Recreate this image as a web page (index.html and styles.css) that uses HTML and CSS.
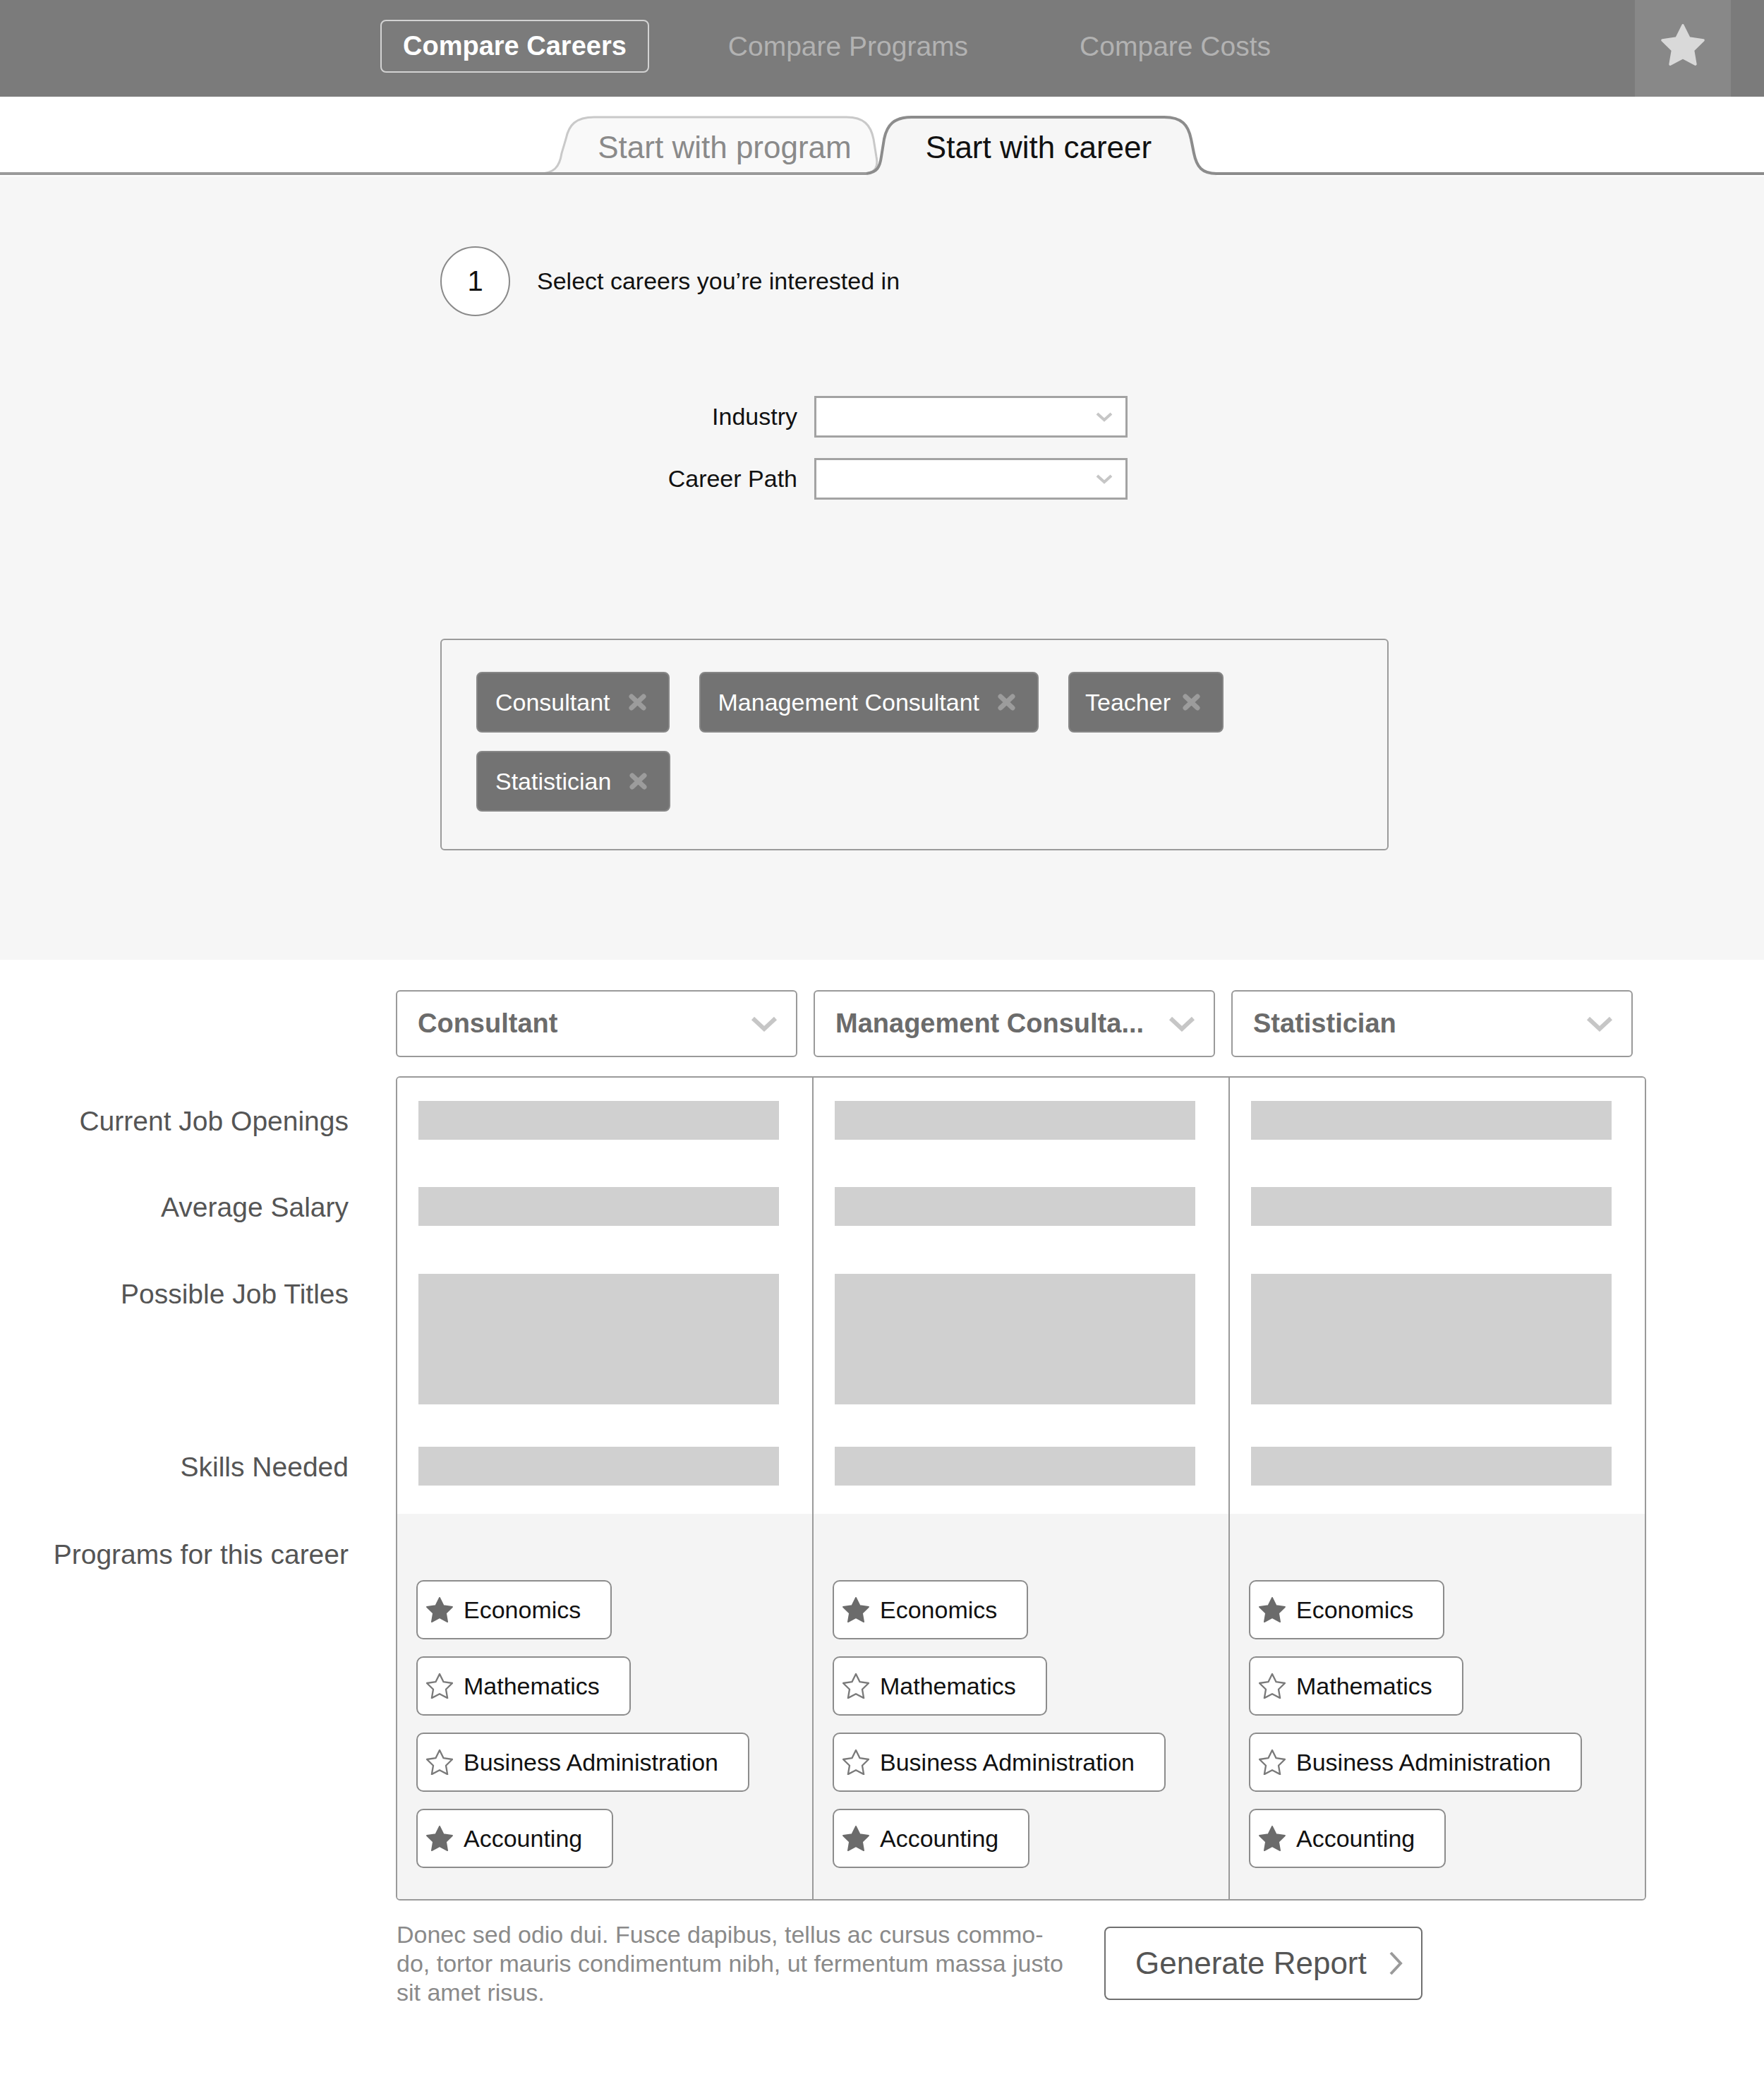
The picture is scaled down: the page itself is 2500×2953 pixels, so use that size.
FILE: index.html
```html
<!DOCTYPE html>
<html lang="en">
<head>
<meta charset="utf-8">
<title>Compare Careers</title>
<link rel="stylesheet" href="styles.css">
</head>
<body>
<header class="topbar">
  <nav class="nav">
    <a class="nav-btn">Compare Careers</a>
    <a class="nav-link nav-programs">Compare Programs</a>
    <a class="nav-link nav-costs">Compare Costs</a>
  </nav>
  <div class="fav">
    <svg class="fav-star" width="64" height="61" viewBox="1 1 22 21"><path d="M12 2l3.09 6.26L22 9.27l-5 4.87 1.18 6.88L12 17.77l-6.18 3.25L7 14.14 2 9.27l6.91-1.01L12 2z" fill="#d9d9d9" stroke="#d9d9d9" stroke-width="1.2" stroke-linejoin="round"/></svg>
  </div>
</header>

<div class="tabs">
  <svg class="tabs-art" width="2500" height="113" viewBox="0 0 2500 113">
    <path d="M763,109 C785,109 793,100 796,80 L802,60 C806,40 816,29 842,29 L1200,29 C1224,29 1234,40 1238,60 L1242,85 C1245,100 1240,107 1228,109 Z" fill="#f9f9f9"/>
    <path d="M763,109 C785,109 793,100 796,80 L802,60 C806,40 816,29 842,29 L1200,29 C1224,29 1234,40 1238,60 L1242,85 C1245,100 1240,107 1228,109" fill="none" stroke="#c9c9c9" stroke-width="3"/>
    <path d="M0,109 L1236,109" stroke="#9a9a9a" stroke-width="4" fill="none"/>
    <path d="M1228,109 C1243,107 1247,100 1249,85 L1253,60 C1257,40 1267,29 1292,29 L1650,29 C1675,29 1684,40 1688,60 L1692,80 C1696,100 1704,109 1724,109 L1724,113 L1228,113 Z" fill="#f6f6f6"/>
    <path d="M1228,109 C1243,107 1247,100 1249,85 L1253,60 C1257,40 1267,29 1292,29 L1650,29 C1675,29 1684,40 1688,60 L1692,80 C1696,100 1704,109 1724,109 L2500,109" fill="none" stroke="#8c8c8c" stroke-width="4"/>
  </svg>
  <div class="tabs-labels">
    <span class="tab tab-program">Start with program</span>
    <span class="tab tab-career">Start with career</span>
  </div>
</div>

<section class="setup">
  <div class="step">
    <div class="step-num">1</div>
    <div class="step-text">Select careers you’re interested in</div>
  </div>

  <div class="filters">
    <label class="filter-label">Industry</label>
    <div class="select"><svg width="24" height="16" viewBox="0 0 24 16"><polyline points="2,3 12,12 22,3" fill="none" stroke="#c6c6c6" stroke-width="4"/></svg></div>
    <label class="filter-label">Career Path</label>
    <div class="select"><svg width="24" height="16" viewBox="0 0 24 16"><polyline points="2,3 12,12 22,3" fill="none" stroke="#c6c6c6" stroke-width="4"/></svg></div>
  </div>

  <div class="tagbox">
    <div class="tag"><span>Consultant</span><svg width="27" height="26" viewBox="0 0 27 26"><path d="M5 5L22 21M22 5L5 21" stroke="#9c9c9c" stroke-width="7" stroke-linecap="round"/></svg></div>
    <div class="tag"><span>Management Consultant</span><svg width="27" height="26" viewBox="0 0 27 26"><path d="M5 5L22 21M22 5L5 21" stroke="#9c9c9c" stroke-width="7" stroke-linecap="round"/></svg></div>
    <div class="tag tag-tight"><span>Teacher</span><svg width="27" height="26" viewBox="0 0 27 26"><path d="M5 5L22 21M22 5L5 21" stroke="#9c9c9c" stroke-width="7" stroke-linecap="round"/></svg></div>
    <div class="tag"><span>Statistician</span><svg width="27" height="26" viewBox="0 0 27 26"><path d="M5 5L22 21M22 5L5 21" stroke="#9c9c9c" stroke-width="7" stroke-linecap="round"/></svg></div>
  </div>
</section>

<section class="compare">
  <div class="heads">
    <div class="head"><span class="head-text">Consultant</span><svg width="38" height="24" viewBox="0 0 38 24"><polyline points="3,4 19,19 35,4" fill="none" stroke="#c6c6c6" stroke-width="6"/></svg></div>
    <div class="head"><span class="head-text">Management Consulta...</span><svg width="38" height="24" viewBox="0 0 38 24"><polyline points="3,4 19,19 35,4" fill="none" stroke="#c6c6c6" stroke-width="6"/></svg></div>
    <div class="head"><span class="head-text">Statistician</span><svg width="38" height="24" viewBox="0 0 38 24"><polyline points="3,4 19,19 35,4" fill="none" stroke="#c6c6c6" stroke-width="6"/></svg></div>
  </div>

  <div class="compare-body">
    <div class="labels">
      <div class="lab lab-a">Current Job Openings</div>
      <div class="lab lab-b">Average Salary</div>
      <div class="lab lab-c">Possible Job Titles</div>
      <div class="lab lab-d">Skills Needed</div>
      <div class="lab">Programs for this career</div>
    </div>

    <div class="table">
      <div class="col">
        <div class="col-top">
          <div class="bar bar-a"></div>
          <div class="bar bar-b"></div>
          <div class="bar bar-tall"></div>
          <div class="bar"></div>
        </div>
        <div class="col-progs">
          <div class="pill"><svg class="star" width="38" height="36" viewBox="1.5 1.5 21 20"><path d="M12 2l3.09 6.26L22 9.27l-5 4.87 1.18 6.88L12 17.77l-6.18 3.25L7 14.14 2 9.27l6.91-1.01L12 2z" class="star-full"/></svg><span>Economics</span></div>
          <div class="pill"><svg class="star" width="38" height="36" viewBox="1.5 1.5 21 20"><path d="M12 2l3.09 6.26L22 9.27l-5 4.87 1.18 6.88L12 17.77l-6.18 3.25L7 14.14 2 9.27l6.91-1.01L12 2z" class="star-empty"/></svg><span>Mathematics</span></div>
          <div class="pill"><svg class="star" width="38" height="36" viewBox="1.5 1.5 21 20"><path d="M12 2l3.09 6.26L22 9.27l-5 4.87 1.18 6.88L12 17.77l-6.18 3.25L7 14.14 2 9.27l6.91-1.01L12 2z" class="star-empty"/></svg><span>Business Administration</span></div>
          <div class="pill"><svg class="star" width="38" height="36" viewBox="1.5 1.5 21 20"><path d="M12 2l3.09 6.26L22 9.27l-5 4.87 1.18 6.88L12 17.77l-6.18 3.25L7 14.14 2 9.27l6.91-1.01L12 2z" class="star-full"/></svg><span>Accounting</span></div>
        </div>
      </div>
      <div class="col">
        <div class="col-top">
          <div class="bar bar-a"></div>
          <div class="bar bar-b"></div>
          <div class="bar bar-tall"></div>
          <div class="bar"></div>
        </div>
        <div class="col-progs">
          <div class="pill"><svg class="star" width="38" height="36" viewBox="1.5 1.5 21 20"><path d="M12 2l3.09 6.26L22 9.27l-5 4.87 1.18 6.88L12 17.77l-6.18 3.25L7 14.14 2 9.27l6.91-1.01L12 2z" class="star-full"/></svg><span>Economics</span></div>
          <div class="pill"><svg class="star" width="38" height="36" viewBox="1.5 1.5 21 20"><path d="M12 2l3.09 6.26L22 9.27l-5 4.87 1.18 6.88L12 17.77l-6.18 3.25L7 14.14 2 9.27l6.91-1.01L12 2z" class="star-empty"/></svg><span>Mathematics</span></div>
          <div class="pill"><svg class="star" width="38" height="36" viewBox="1.5 1.5 21 20"><path d="M12 2l3.09 6.26L22 9.27l-5 4.87 1.18 6.88L12 17.77l-6.18 3.25L7 14.14 2 9.27l6.91-1.01L12 2z" class="star-empty"/></svg><span>Business Administration</span></div>
          <div class="pill"><svg class="star" width="38" height="36" viewBox="1.5 1.5 21 20"><path d="M12 2l3.09 6.26L22 9.27l-5 4.87 1.18 6.88L12 17.77l-6.18 3.25L7 14.14 2 9.27l6.91-1.01L12 2z" class="star-full"/></svg><span>Accounting</span></div>
        </div>
      </div>
      <div class="col">
        <div class="col-top">
          <div class="bar bar-a"></div>
          <div class="bar bar-b"></div>
          <div class="bar bar-tall"></div>
          <div class="bar"></div>
        </div>
        <div class="col-progs">
          <div class="pill"><svg class="star" width="38" height="36" viewBox="1.5 1.5 21 20"><path d="M12 2l3.09 6.26L22 9.27l-5 4.87 1.18 6.88L12 17.77l-6.18 3.25L7 14.14 2 9.27l6.91-1.01L12 2z" class="star-full"/></svg><span>Economics</span></div>
          <div class="pill"><svg class="star" width="38" height="36" viewBox="1.5 1.5 21 20"><path d="M12 2l3.09 6.26L22 9.27l-5 4.87 1.18 6.88L12 17.77l-6.18 3.25L7 14.14 2 9.27l6.91-1.01L12 2z" class="star-empty"/></svg><span>Mathematics</span></div>
          <div class="pill"><svg class="star" width="38" height="36" viewBox="1.5 1.5 21 20"><path d="M12 2l3.09 6.26L22 9.27l-5 4.87 1.18 6.88L12 17.77l-6.18 3.25L7 14.14 2 9.27l6.91-1.01L12 2z" class="star-empty"/></svg><span>Business Administration</span></div>
          <div class="pill"><svg class="star" width="38" height="36" viewBox="1.5 1.5 21 20"><path d="M12 2l3.09 6.26L22 9.27l-5 4.87 1.18 6.88L12 17.77l-6.18 3.25L7 14.14 2 9.27l6.91-1.01L12 2z" class="star-full"/></svg><span>Accounting</span></div>
        </div>
      </div>
    </div>
  </div>

  <div class="foot">
    <p class="foot-text">Donec sed odio dui. Fusce dapibus, tellus ac cursus commo-<br>do, tortor mauris condimentum nibh, ut fermentum massa justo<br>sit amet risus.</p>
    <a class="report-btn"><span>Generate Report</span><svg width="22" height="36" viewBox="0 0 22 36"><polyline points="4,3 18,18 4,33" fill="none" stroke="#9a9a9a" stroke-width="4"/></svg></a>
  </div>
</section>
</body>
</html>
```

FILE: styles.css
```css
html, body {
  margin: 0;
  padding: 0;
  background: #ffffff;
}
body {
  width: 2500px;
  min-height: 2953px;
  font-family: "Liberation Sans", Arial, Helvetica, sans-serif;
  color: #111111;
}

/* Top bar */
.topbar {
  display: flex;
  height: 137px;
  background: #7b7b7b;
}
.nav {
  flex: 1;
  display: flex;
  align-items: center;
  padding-left: 539px;
  padding-bottom: 6px;
}
.nav-btn {
  display: flex;
  align-items: center;
  height: 75px;
  box-sizing: border-box;
  padding: 0 30px;
  border: 2px solid #d2d2d2;
  border-radius: 8px;
  color: #ffffff;
  font-weight: bold;
  font-size: 38px;
}
.nav-link {
  color: #b2b2b2;
  font-size: 39px;
}
.nav-programs { margin-left: 112px; }
.nav-costs { margin-left: 158px; }
.fav {
  width: 136px;
  background: #888888;
  margin-right: 47px;
  display: flex;
  align-items: center;
  justify-content: center;
  padding-bottom: 10px;
  box-sizing: border-box;
}
.fav-star { display: block; }

/* Tabs */
.tabs {
  display: grid;
  height: 113px;
}
.tabs > * {
  grid-area: 1 / 1;
}
.tabs-art { display: block; }
.tabs-labels {
  display: flex;
  align-items: center;
  padding: 30px 0 0 800px;
  font-size: 44px;
}
.tab {
  text-align: center;
}
.tab-program {
  width: 454px;
  color: #8a8a8a;
}
.tab-career {
  width: 436px;
  color: #111111;
}

/* Setup area */
.setup {
  background: #f6f6f6;
  padding: 99px 0 155px 624px;
}
.step {
  display: flex;
  align-items: center;
  gap: 38px;
}
.step-num {
  width: 99px;
  height: 99px;
  box-sizing: border-box;
  border: 2px solid #8a8a8a;
  border-radius: 50%;
  background: #ffffff;
  display: flex;
  align-items: center;
  justify-content: center;
  font-size: 40px;
  color: #111111;
}
.step-text {
  font-size: 34px;
  color: #111111;
}
.filters {
  display: grid;
  grid-template-columns: 300px 444px;
  column-gap: 24px;
  row-gap: 29px;
  margin: 113px 0 0 206px;
  align-items: center;
}
.filter-label {
  text-align: right;
  font-size: 34px;
  color: #111111;
}
.select {
  height: 59px;
  box-sizing: border-box;
  border: 3px solid #a3a3a3;
  background: #ffffff;
  display: flex;
  align-items: center;
  justify-content: flex-end;
  padding-right: 18px;
}
.tagbox {
  margin-top: 197px;
  width: 1344px;
  height: 300px;
  box-sizing: border-box;
  border: 2px solid #9b9b9b;
  border-radius: 6px;
  padding: 45px 49px;
  display: flex;
  flex-wrap: wrap;
  align-content: flex-start;
  gap: 26px 42px;
}
.tag {
  height: 86px;
  box-sizing: border-box;
  border: 2px solid #878787;
  border-radius: 8px;
  background: #737373;
  color: #ffffff;
  font-size: 34px;
  display: flex;
  align-items: center;
  gap: 25px;
  padding: 0 30px 0 25px;
}
.tag-tight {
  gap: 16px;
  padding-left: 22px;
}
.tag svg { display: block; }

/* Comparison */
.compare {
  padding-top: 43px;
}
.heads {
  display: flex;
  gap: 23px;
  margin-left: 561px;
}
.head {
  width: 569px;
  height: 95px;
  box-sizing: border-box;
  border: 2px solid #9a9a9a;
  border-radius: 6px;
  background: #ffffff;
  display: flex;
  align-items: center;
  justify-content: space-between;
  padding: 0 26px 0 29px;
}
.head-text {
  font-size: 38px;
  font-weight: bold;
  color: #6b6b6b;
  white-space: nowrap;
}
.head svg { display: block; }
.compare-body {
  display: flex;
  margin-top: 27px;
}
.labels {
  width: 494px;
  margin-right: 67px;
  padding-top: 35px;
  text-align: right;
  font-size: 39px;
  color: #555555;
}
.lab {
  height: 55px;
  line-height: 57px;
  white-space: nowrap;
}
.lab-a { margin-bottom: 67px; }
.lab-b { margin-bottom: 68px; }
.lab-c { height: 185px; margin-bottom: 60px; }
.lab-d { margin-bottom: 69px; }

.table {
  width: 1772px;
  box-sizing: border-box;
  border: 2px solid #9a9a9a;
  border-radius: 6px;
  display: flex;
  overflow: hidden;
}
.col {
  flex: 1;
  display: flex;
  flex-direction: column;
}
.col + .col {
  border-left: 2px solid #9a9a9a;
}
.col-top {
  background: #ffffff;
  padding: 33px 47px 40px 30px;
  display: flex;
  flex-direction: column;
}
.bar {
  height: 55px;
  background: #d0d0d0;
}
.bar-a { margin-bottom: 67px; }
.bar-b { margin-bottom: 68px; }
.bar-tall { height: 185px; margin-bottom: 60px; }
.col-progs {
  flex: 1;
  background: #f4f4f4;
  padding: 94px 20px 44px 27px;
  display: flex;
  flex-direction: column;
  align-items: flex-start;
  gap: 24px;
}
.pill {
  height: 84px;
  box-sizing: border-box;
  border: 2px solid #8c8c8c;
  border-radius: 10px;
  background: #ffffff;
  display: flex;
  align-items: center;
  gap: 15px;
  padding: 0 42px 0 12px;
  font-size: 34px;
  color: #111111;
  white-space: nowrap;
}
.star { display: block; }
.star-full {
  fill: #6b6b6b;
  stroke: #6b6b6b;
  stroke-width: 1;
  stroke-linejoin: round;
}
.star-empty {
  fill: none;
  stroke: #7a7a7a;
  stroke-width: 1.3;
  stroke-linejoin: round;
}

/* Footer */
.foot {
  display: flex;
  align-items: flex-start;
  margin: 28px 0 0 562px;
}
.foot-text {
  margin: 0;
  width: 950px;
  font-size: 34px;
  line-height: 41px;
  color: #8a8a8a;
  white-space: nowrap;
}
.report-btn {
  margin: 9px 0 0 53px;
  width: 451px;
  height: 104px;
  box-sizing: border-box;
  border: 2px solid #707070;
  border-radius: 8px;
  display: flex;
  align-items: center;
  gap: 30px;
  padding: 0 0 0 42px;
  font-size: 44px;
  color: #555555;
}
.report-btn svg { display: block; }
```
